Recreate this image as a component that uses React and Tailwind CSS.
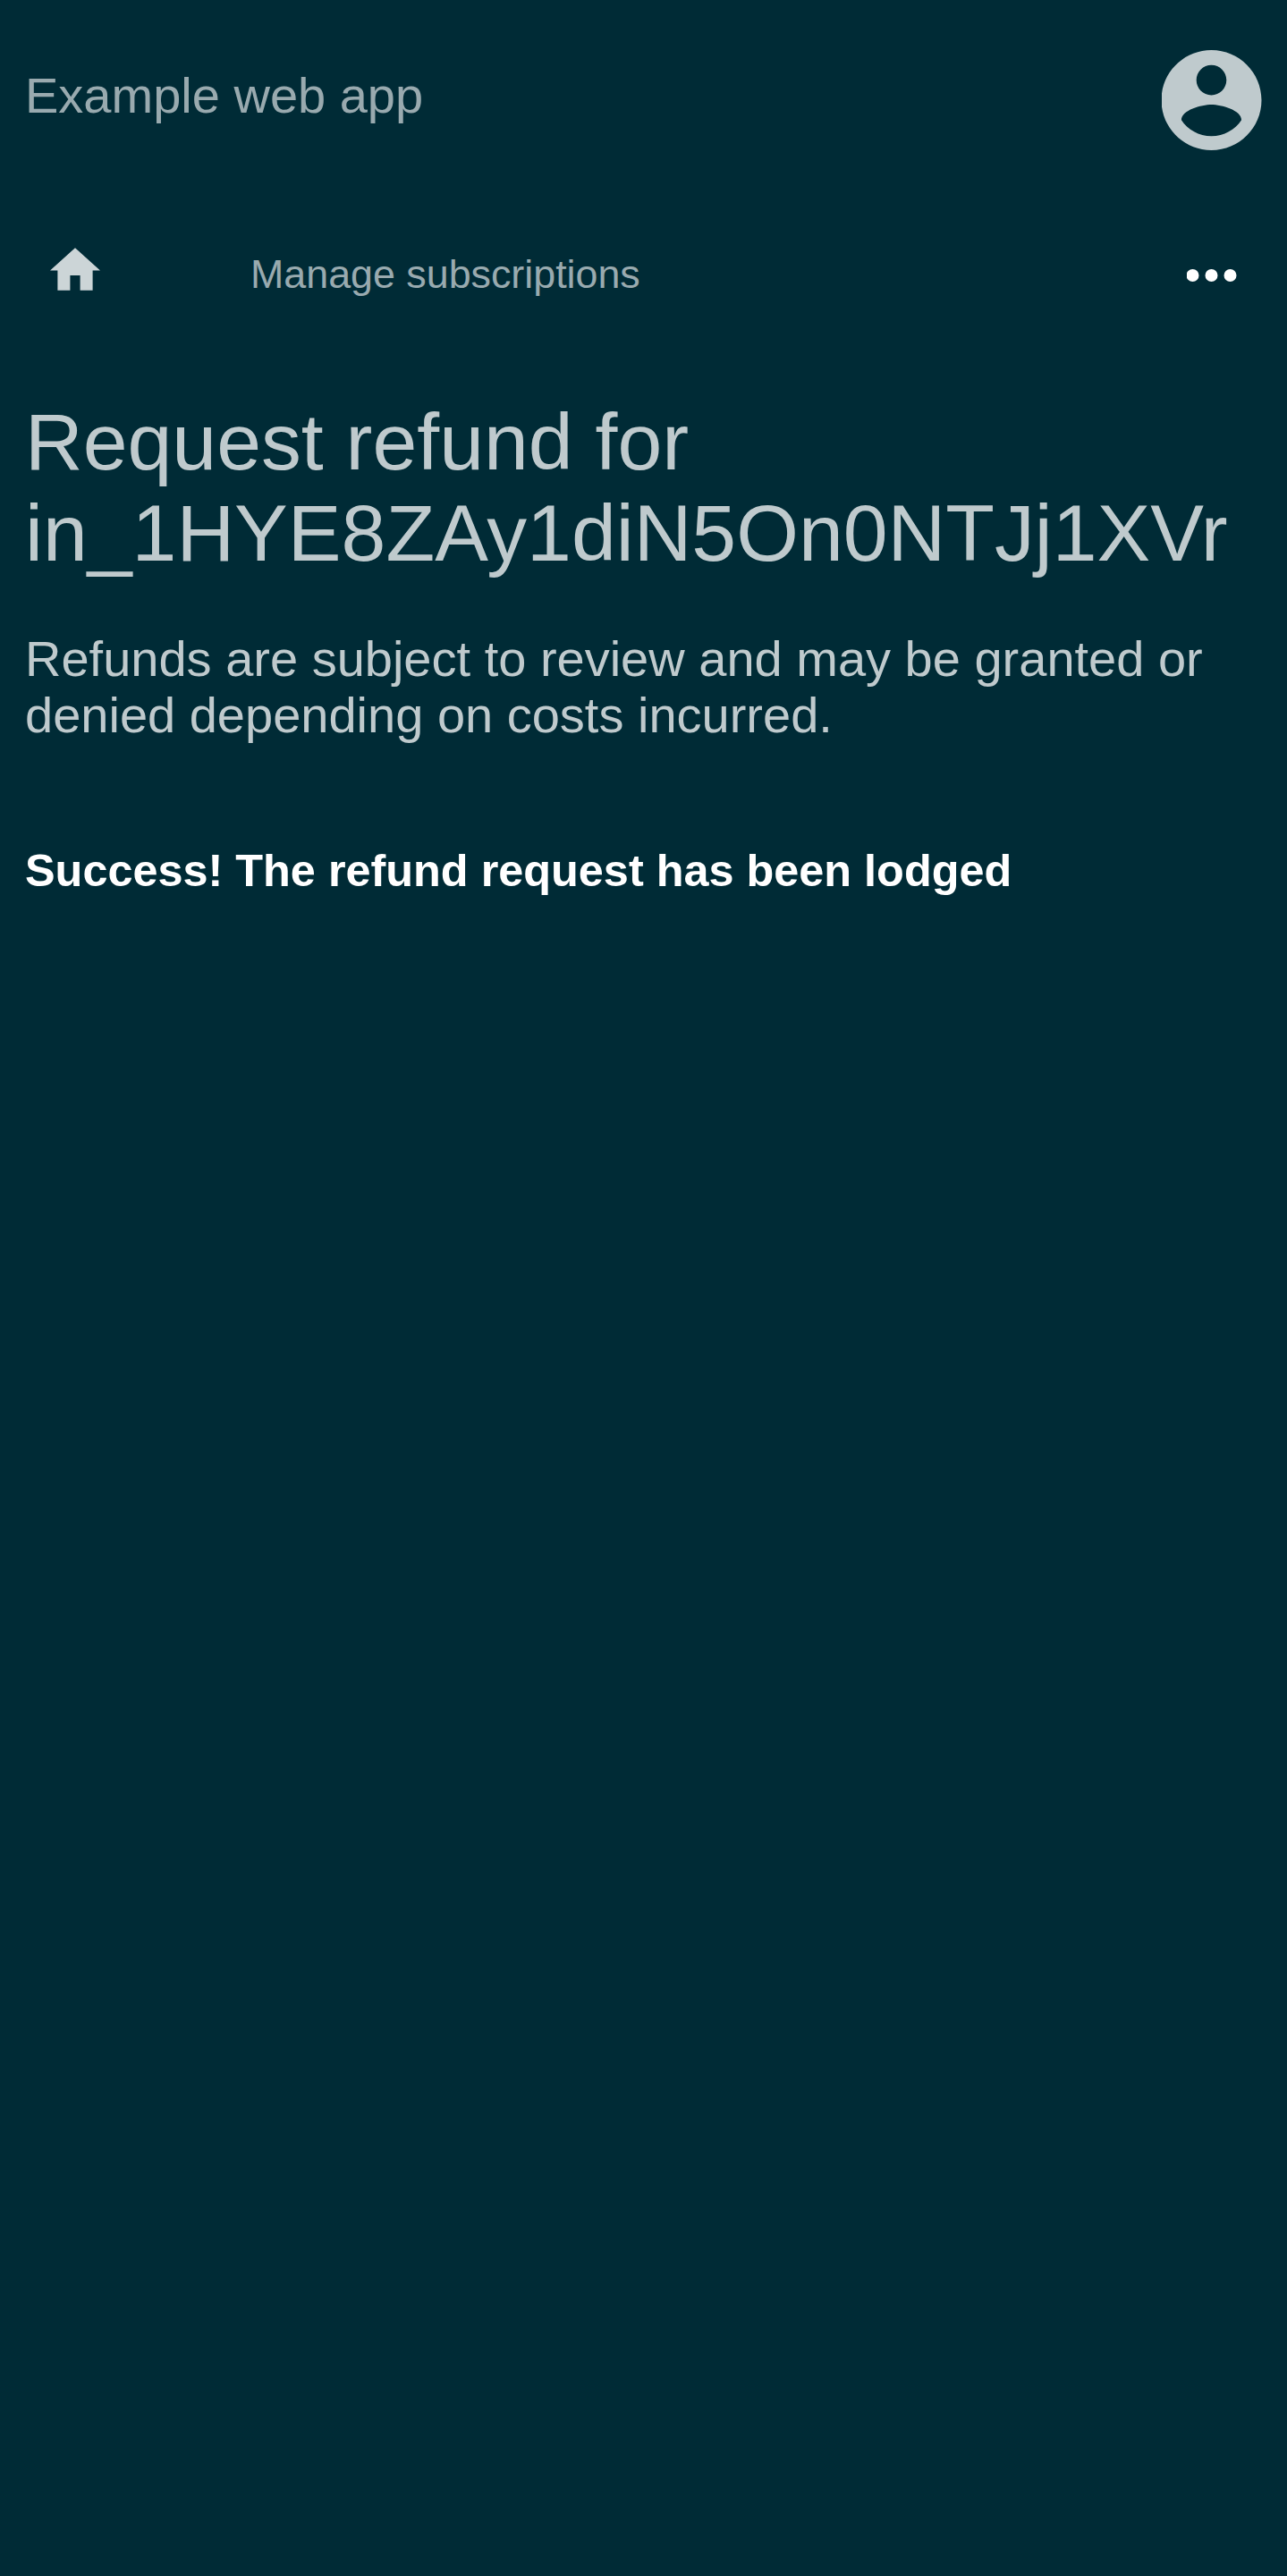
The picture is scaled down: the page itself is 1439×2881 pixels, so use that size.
function AccountIcon() {
  return (
    <svg className="block h-28 w-28 text-[#bfcacd]" viewBox="2.09 2 20 20" fill="currentColor" aria-hidden="true">
      <path d="M12 2C6.48 2 2 6.48 2 12s4.48 10 10 10 10-4.48 10-10S17.52 2 12 2zm0 3c1.66 0 3 1.34 3 3s-1.34 3-3 3-3-1.34-3-3 1.34-3 3-3zm0 14.2c-2.5 0-4.71-1.28-6-3.22.03-1.99 4-3.08 6-3.08 1.99 0 5.97 1.09 6 3.08-1.29 1.94-3.5 3.22-6 3.22z" />
    </svg>
  );
}

function HomeIcon() {
  return (
    <svg className="block h-14 w-14 text-[#ccd5d7]" viewBox="2 1.86 20 20" fill="currentColor" aria-hidden="true">
      <path d="M10 20v-6h4v6h5v-8h3L12 3 2 12h3v8z" />
    </svg>
  );
}

function MoreIcon() {
  return (
    <svg className="block h-14 w-14 text-white" viewBox="0.5 0 56 56" fill="currentColor" aria-hidden="true">
      <circle cx="7" cy="28" r="7" />
      <circle cx="28" cy="28" r="7" />
      <circle cx="49" cy="28" r="7" />
    </svg>
  );
}

export default function App() {
  return (
    <div className="min-h-[2881px] w-full overflow-hidden bg-[#002b36] font-['Liberation_Sans',Arial,sans-serif] text-[#bfcacd]">
      <header className="flex h-56 items-start justify-between px-7 pt-14">
        <a className="mt-[19px] text-[56px] leading-[63px] text-[#99aaaf]">Example web app</a>
        <button type="button" aria-label="Account"><AccountIcon /></button>
      </header>
      <nav className="flex h-[168px] items-start px-14 pt-[50px]">
        <a aria-label="Home"><HomeIcon /></a>
        <a className="mt-[6px] ml-[168px] text-[44.8px] leading-[52px] text-[#99aaaf]">Manage subscriptions</a>
        <button type="button" aria-label="More" className="mt-[6px] ml-auto"><MoreIcon /></button>
      </nav>
      <main className="px-7">
        <h1 className="mt-[51px] text-[89.6px] leading-[102px]">
          Request refund for in_1HYE8ZAy1diN5On0NTJj1XVr
        </h1>
        <p className="mt-[58px] text-[56px] leading-[63px]">
          Refunds are subject to review and may be granted or denied depending on costs incurred.
        </p>
        <p className="mt-[114px] text-[50.4px] leading-[57px] font-bold text-white">
          Success! The refund request has been lodged
        </p>
      </main>
    </div>
  );
}
